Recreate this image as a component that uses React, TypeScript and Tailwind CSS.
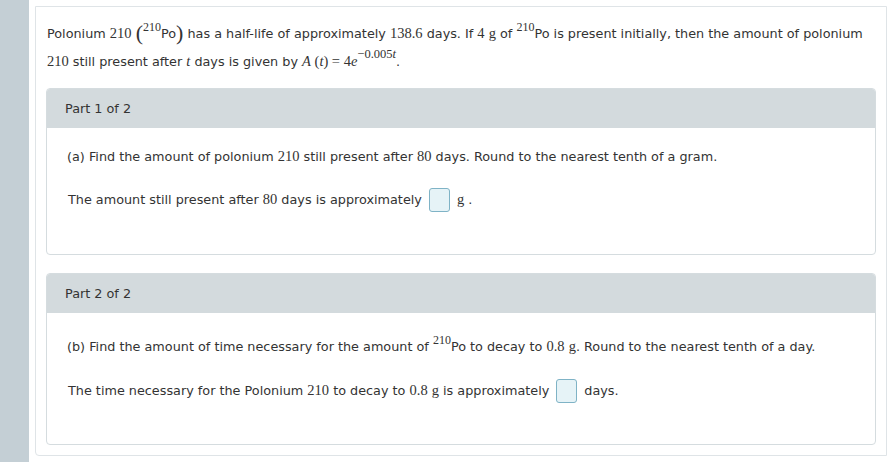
const serif = "font-['Liberation_Serif','Times_New_Roman',serif]";

const Num = ({ children }: { children: React.ReactNode }) => (
  <span className={`${serif} text-[14.5px]`}>{children}</span>
);

const Iso = () => (
  <span>
    <span className={`${serif} text-[12px] relative top-[-7px]`}>210</span>Po
  </span>
);

const AnswerBox = () => (
  <span className="inline-block align-middle w-[21px] h-[24px] mx-[7px] rounded-[3px] border border-[#7fb3c6] bg-[#e6f3f7]" />
);

const App = () => {
  return (
    <div className="flex w-[888px] h-[462px] bg-white text-[#333] font-['DejaVu_Sans',Verdana,sans-serif] text-[12.8px] overflow-hidden">
      {/* left rail */}
      <div className="w-[29px] shrink-0 bg-[#c4cfd5]" />

      <div className="flex-1 pl-[6px] pt-[6px] pr-[1px] pb-[6px]">
        <div className="h-full border border-[#dfe4e7] rounded-bl-[4px] px-[10px] pt-[12px]">
          {/* problem statement */}
          <div className="leading-[27px] pl-[1px] whitespace-nowrap">
            Polonium <Num>210</Num>{" "}
            <span className={`${serif} text-[22px] align-[-2px]`}>(</span>
            <Iso />
            <span className={`${serif} text-[22px] align-[-2px]`}>)</span> has a half-life of approximately{" "}
            <Num>138.6</Num> days. If <Num>4</Num> <Num>g</Num> of <Iso /> is present initially, then the amount of polonium
            <br />
            <Num>210</Num> still present after <span className={`${serif} italic text-[14.5px]`}>t</span> days is given by{" "}
            <span className={`${serif} text-[14.5px]`}>
              <i>A</i> (<i>t</i>) = 4<i>e</i>
              <span className="text-[12.5px] relative top-[-8px]">
                −0.005<i>t</i>
              </span>
            </span>
            .
          </div>

          {/* part 1 */}
          <div className="mt-[12px] border border-[#d5dcdf] rounded-[4px] overflow-hidden">
            <div className="h-[39px] flex items-center px-[18px] bg-[#d3dadd]">Part 1 of 2</div>
            <div className="h-[126px] px-[20px] pt-[18px]">
              <div>
                (a) Find the amount of polonium <Num>210</Num> still present after <Num>80</Num> days. Round to the nearest tenth of a gram.
              </div>
              <div className="mt-[20px] flex items-center pl-[1px]">
                The amount still present after&nbsp;<Num>80</Num>&nbsp;days is approximately
                <AnswerBox />
                <Num>g</Num>&nbsp;.
              </div>
            </div>
          </div>

          {/* part 2 */}
          <div className="mt-[18px] border border-[#d5dcdf] rounded-[4px] overflow-hidden">
            <div className="h-[39px] flex items-center px-[18px] bg-[#d3dadd]">Part 2 of 2</div>
            <div className="h-[131px] px-[20px] pt-[23px]">
              <div>
                (b) Find the amount of time necessary for the amount of <Iso /> to decay to <Num>0.8</Num> <Num>g</Num>. Round to the nearest tenth of a day.
              </div>
              <div className="mt-[21px] flex items-center pl-[1px]">
                The time necessary for the Polonium&nbsp;<Num>210</Num>&nbsp;to decay to&nbsp;<Num>0.8</Num>&nbsp;<Num>g</Num>&nbsp;is approximately
                <AnswerBox />
                days.
              </div>
            </div>
          </div>
        </div>
      </div>
    </div>
  );
};

export default App;
